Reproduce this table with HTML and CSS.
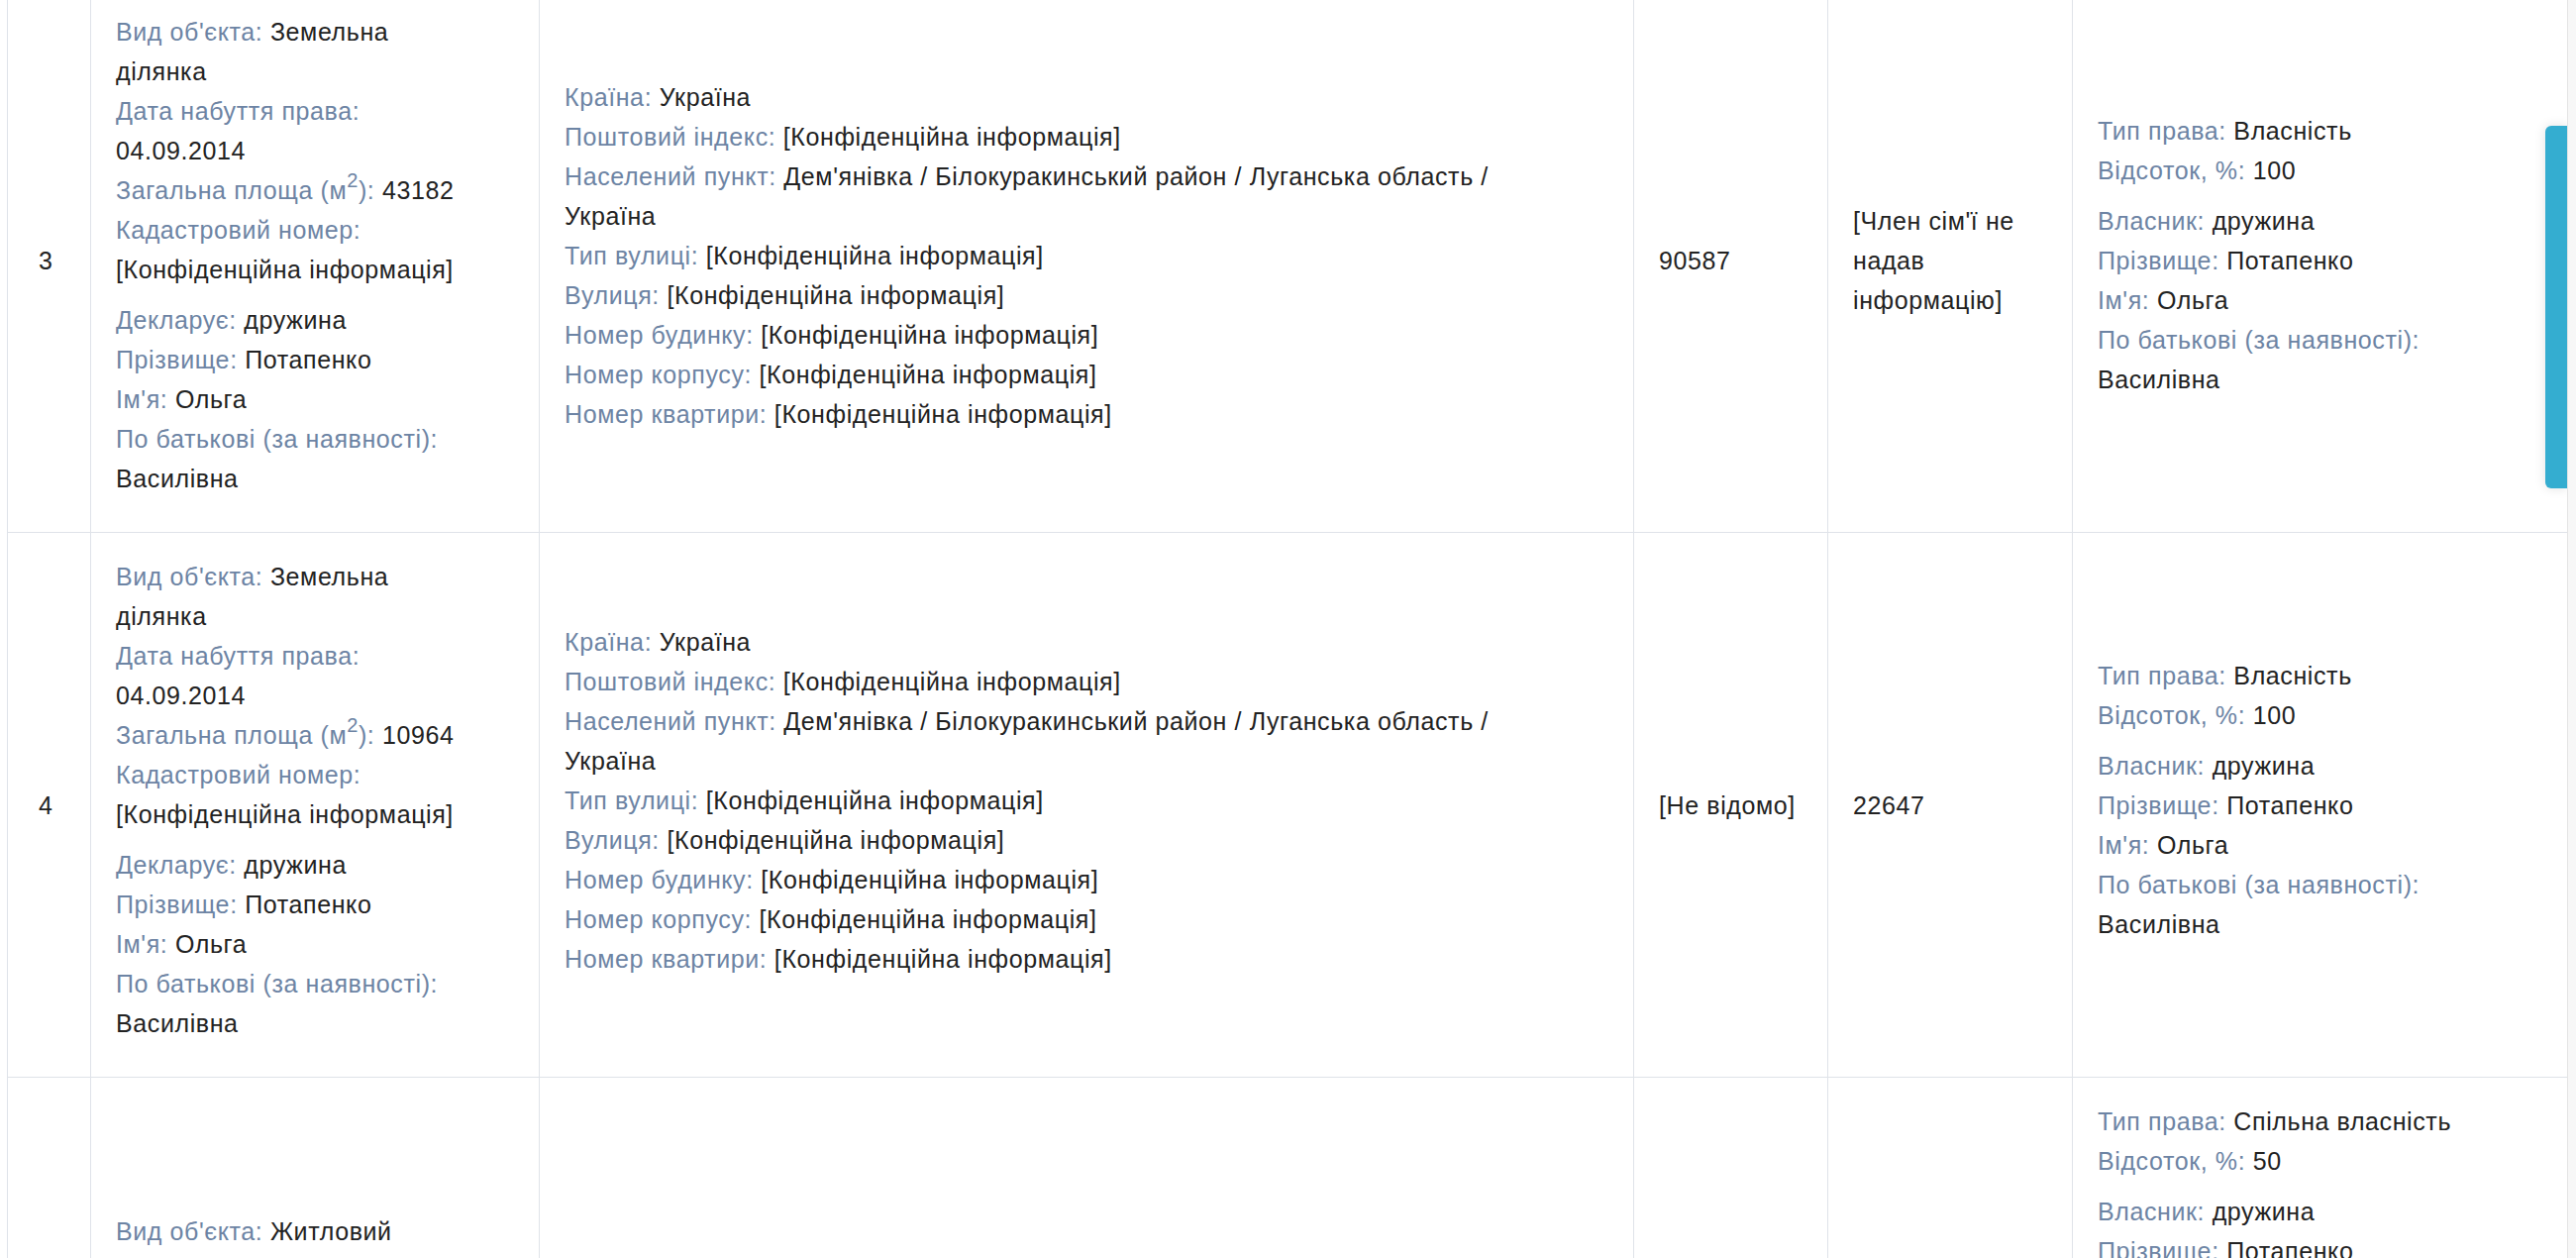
FILE: index.html
```html
<!DOCTYPE html>
<html lang="uk">
<head>
<meta charset="utf-8">
<title>Декларація</title>
<link rel="stylesheet" href="styles.css">
</head>
<body>
<div class="page">
  <table class="decl">
    <colgroup>
      <col class="c-num">
      <col class="c-obj">
      <col class="c-addr">
      <col class="c-cost">
      <col class="c-cost2">
      <col class="c-own">
    </colgroup>
    <tbody>
      <tr>
        <td class="num">3</td>
        <td>
          <div class="obj">
            <div class="blk">
              <div class="ln"><span class="lbl">Вид об'єкта:</span> Земельна ділянка</div>
              <div class="ln"><span class="lbl">Дата набуття права:</span> 04.09.2014</div>
              <div class="ln"><span class="lbl">Загальна площа (м<sup>2</sup>):</span> 43182</div>
              <div class="ln"><span class="lbl">Кадастровий номер:</span> [Конфіденційна інформація]</div>
            </div>
            <div class="blk">
              <div class="ln"><span class="lbl">Декларує:</span> дружина</div>
              <div class="ln"><span class="lbl">Прізвище:</span> Потапенко</div>
              <div class="ln"><span class="lbl">Ім'я:</span> Ольга</div>
              <div class="ln"><span class="lbl">По батькові (за наявності):</span> Василівна</div>
            </div>
          </div>
        </td>
        <td>
          <div class="blk addr">
            <div class="ln"><span class="lbl">Країна:</span> Україна</div>
            <div class="ln"><span class="lbl">Поштовий індекс:</span> [Конфіденційна інформація]</div>
            <div class="ln"><span class="lbl">Населений пункт:</span> Дем'янівка / Білокуракинський район / Луганська область / Україна</div>
            <div class="ln"><span class="lbl">Тип вулиці:</span> [Конфіденційна інформація]</div>
            <div class="ln"><span class="lbl">Вулиця:</span> [Конфіденційна інформація]</div>
            <div class="ln"><span class="lbl">Номер будинку:</span> [Конфіденційна інформація]</div>
            <div class="ln"><span class="lbl">Номер корпусу:</span> [Конфіденційна інформація]</div>
            <div class="ln"><span class="lbl">Номер квартири:</span> [Конфіденційна інформація]</div>
          </div>
        </td>
        <td class="plain">90587</td>
        <td class="plain">[Член сім'ї не надав інформацію]</td>
        <td>
          <div class="own">
            <div class="blk">
              <div class="ln"><span class="lbl">Тип права:</span> Власність</div>
              <div class="ln"><span class="lbl">Відсоток, %:</span> 100</div>
            </div>
            <div class="blk">
              <div class="ln"><span class="lbl">Власник:</span> дружина</div>
              <div class="ln"><span class="lbl">Прізвище:</span> Потапенко</div>
              <div class="ln"><span class="lbl">Ім'я:</span> Ольга</div>
              <div class="ln"><span class="lbl">По батькові (за наявності):</span> Василівна</div>
            </div>
          </div>
        </td>
      </tr>
      <tr>
        <td class="num">4</td>
        <td>
          <div class="obj">
            <div class="blk">
              <div class="ln"><span class="lbl">Вид об'єкта:</span> Земельна ділянка</div>
              <div class="ln"><span class="lbl">Дата набуття права:</span> 04.09.2014</div>
              <div class="ln"><span class="lbl">Загальна площа (м<sup>2</sup>):</span> 10964</div>
              <div class="ln"><span class="lbl">Кадастровий номер:</span> [Конфіденційна інформація]</div>
            </div>
            <div class="blk">
              <div class="ln"><span class="lbl">Декларує:</span> дружина</div>
              <div class="ln"><span class="lbl">Прізвище:</span> Потапенко</div>
              <div class="ln"><span class="lbl">Ім'я:</span> Ольга</div>
              <div class="ln"><span class="lbl">По батькові (за наявності):</span> Василівна</div>
            </div>
          </div>
        </td>
        <td>
          <div class="blk addr">
            <div class="ln"><span class="lbl">Країна:</span> Україна</div>
            <div class="ln"><span class="lbl">Поштовий індекс:</span> [Конфіденційна інформація]</div>
            <div class="ln"><span class="lbl">Населений пункт:</span> Дем'янівка / Білокуракинський район / Луганська область / Україна</div>
            <div class="ln"><span class="lbl">Тип вулиці:</span> [Конфіденційна інформація]</div>
            <div class="ln"><span class="lbl">Вулиця:</span> [Конфіденційна інформація]</div>
            <div class="ln"><span class="lbl">Номер будинку:</span> [Конфіденційна інформація]</div>
            <div class="ln"><span class="lbl">Номер корпусу:</span> [Конфіденційна інформація]</div>
            <div class="ln"><span class="lbl">Номер квартири:</span> [Конфіденційна інформація]</div>
          </div>
        </td>
        <td class="plain">[Не відомо]</td>
        <td class="plain">22647</td>
        <td>
          <div class="own">
            <div class="blk">
              <div class="ln"><span class="lbl">Тип права:</span> Власність</div>
              <div class="ln"><span class="lbl">Відсоток, %:</span> 100</div>
            </div>
            <div class="blk">
              <div class="ln"><span class="lbl">Власник:</span> дружина</div>
              <div class="ln"><span class="lbl">Прізвище:</span> Потапенко</div>
              <div class="ln"><span class="lbl">Ім'я:</span> Ольга</div>
              <div class="ln"><span class="lbl">По батькові (за наявності):</span> Василівна</div>
            </div>
          </div>
        </td>
      </tr>
      <tr>
        <td class="num">5</td>
        <td>
          <div class="obj">
            <div class="blk">
              <div class="ln"><span class="lbl">Вид об'єкта:</span> Житловий будинок</div>
              <div class="ln"><span class="lbl">Дата набуття права:</span> 04.09.2014</div>
              <div class="ln"><span class="lbl">Загальна площа (м<sup>2</sup>):</span> 72.5</div>
              <div class="ln"><span class="lbl">Реєстраційний номер:</span> [Конфіденційна інформація]</div>
            </div>
            <div class="blk">
              <div class="ln"><span class="lbl">Декларує:</span> дружина</div>
              <div class="ln"><span class="lbl">Прізвище:</span> Потапенко</div>
              <div class="ln"><span class="lbl">Ім'я:</span> Ольга</div>
              <div class="ln"><span class="lbl">По батькові (за наявності):</span> Василівна</div>
            </div>
          </div>
        </td>
        <td>
          <div class="blk addr">
            <div class="ln"><span class="lbl">Країна:</span> Україна</div>
            <div class="ln"><span class="lbl">Поштовий індекс:</span> [Конфіденційна інформація]</div>
            <div class="ln"><span class="lbl">Населений пункт:</span> Дем'янівка / Білокуракинський район / Луганська область / Україна</div>
            <div class="ln"><span class="lbl">Тип вулиці:</span> [Конфіденційна інформація]</div>
            <div class="ln"><span class="lbl">Вулиця:</span> [Конфіденційна інформація]</div>
            <div class="ln"><span class="lbl">Номер будинку:</span> [Конфіденційна інформація]</div>
            <div class="ln"><span class="lbl">Номер корпусу:</span> [Конфіденційна інформація]</div>
            <div class="ln"><span class="lbl">Номер квартири:</span> [Конфіденційна інформація]</div>
          </div>
        </td>
        <td class="plain">[Не відомо]</td>
        <td class="plain">[Не відомо]</td>
        <td>
          <div class="own">
            <div class="blk">
              <div class="ln"><span class="lbl">Тип права:</span> Спільна власність</div>
              <div class="ln"><span class="lbl">Відсоток, %:</span> 50</div>
            </div>
            <div class="blk">
              <div class="ln"><span class="lbl">Власник:</span> дружина</div>
              <div class="ln"><span class="lbl">Прізвище:</span> Потапенко</div>
              <div class="ln"><span class="lbl">Ім'я:</span> Ольга</div>
              <div class="ln"><span class="lbl">По батькові (за наявності):</span> Василівна</div>
            </div>
            <div class="blk">
              <div class="ln"><span class="lbl">Тип права:</span> Спільна власність</div>
              <div class="ln"><span class="lbl">Відсоток, %:</span> 50</div>
            </div>
            <div class="blk">
              <div class="ln"><span class="lbl">Власник:</span> Декларант</div>
              <div class="ln"><span class="lbl">Прізвище:</span> Потапенко</div>
              <div class="ln"><span class="lbl">Ім'я:</span> Олександр</div>
              <div class="ln"><span class="lbl">По батькові (за наявності):</span> Іванович</div>
              <div class="ln"><span class="lbl">Громадянство:</span> Україна</div>
              <div class="ln"><span class="lbl">Місце проживання:</span> Україна</div>
              <div class="ln"><span class="lbl">Підстава набуття права:</span> Договір купівлі-продажу</div>
            </div>
          </div>
        </td>
      </tr>
    </tbody>
  </table>
</div>
<div class="side-tab"></div>
<div class="scroll-track"></div>
</body>
</html>
```

FILE: styles.css
```css
html, body {
  margin: 0;
  padding: 0;
  background: #ffffff;
  overflow: hidden;
}

body {
  font-family: "Liberation Sans", Arial, Helvetica, sans-serif;
  font-size: 25px;
  letter-spacing: 0.6px;
  line-height: 40px;
  color: #222222;
}

.page {
  padding-left: 7px;
  margin-top: -13px;
}

.decl {
  border-collapse: collapse;
  table-layout: fixed;
  width: 2586px;
}

.c-num { width: 84px; }
.c-obj { width: 453px; }
.c-addr { width: 1105px; }
.c-cost { width: 196px; }
.c-cost2 { width: 247px; }
.c-own { width: 501px; }

.decl td {
  border: 1px solid #dfe3e9;
  padding: 24px 25px 23px 25px;
  vertical-align: middle;
  text-align: left;
}

.decl td.num {
  padding-left: 31px;
}

.blk {
  margin-bottom: 11px;
}

.obj {
  max-width: 362px;
}

.addr {
  max-width: 1000px;
}

.own {
  max-width: 440px;
}

.lbl {
  color: #6d84a4;
}

sup {
  font-size: 20px;
  line-height: 0;
  position: relative;
  vertical-align: baseline;
  top: -12px;
}

.side-tab {
  position: fixed;
  top: 127px;
  right: 9px;
  width: 22px;
  height: 366px;
  background: #34add0;
  border-radius: 6px 0 0 6px;
  box-shadow: 0 0 12px rgba(0, 0, 0, 0.12);
}

.scroll-track {
  position: fixed;
  top: 0;
  right: 0;
  width: 8px;
  height: 100%;
  background: #f7f7f7;
  border-left: 1px solid #e4e4e4;
}
```
